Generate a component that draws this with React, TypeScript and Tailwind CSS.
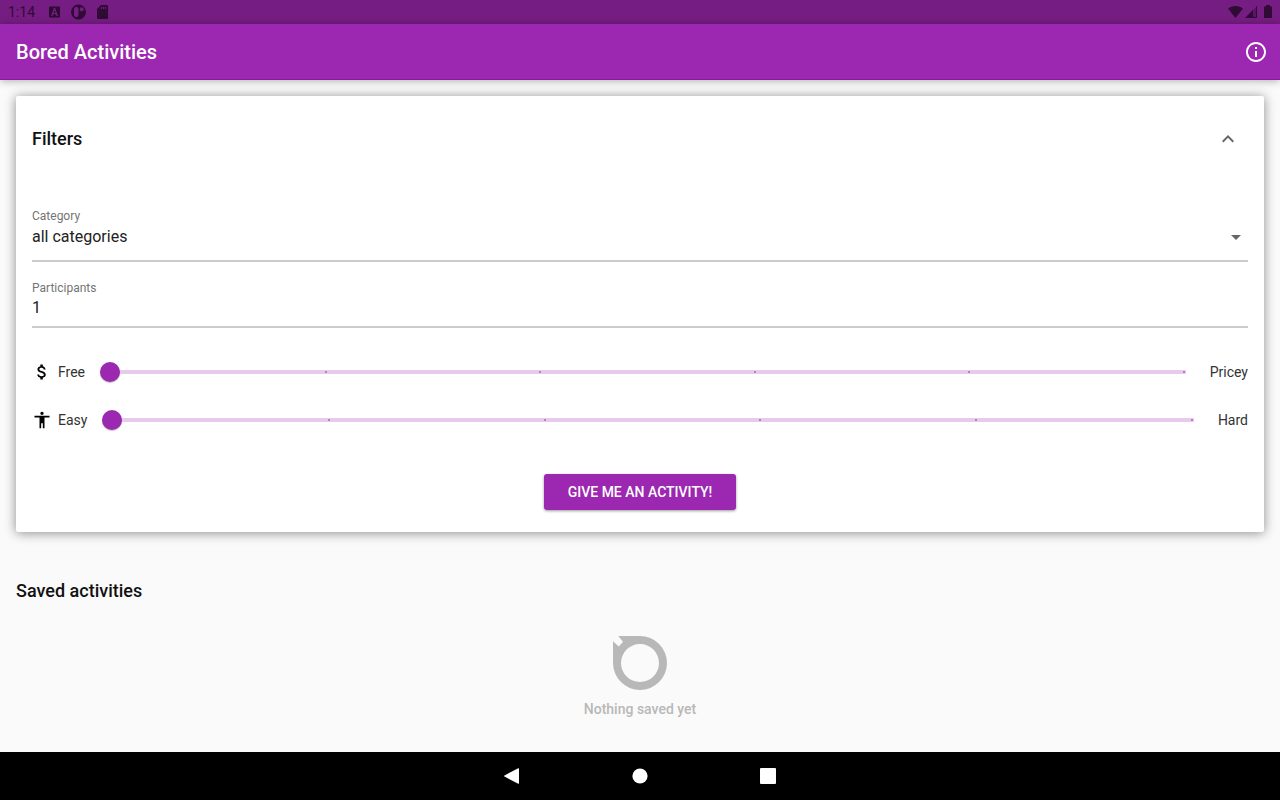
import { useState } from "react";
import { MdAccessibility, MdArrowDropDown, MdAttachMoney, MdExpandLess, MdInfoOutline } from "react-icons/md";
import type { ReactNode } from "react";

function StatusBar() {
  return (
    <div className="flex h-6 items-center justify-between bg-[#761d83] pl-2 pr-1 text-[#2f0b35]">
      <div className="flex items-center">
        <span className="w-10 text-sm">1:14</span>
        <svg viewBox="0 0 70 24" className="h-6 w-[70px]" fill="currentColor" aria-hidden="true">
          <path fillRule="evenodd" d="M2 6.500h9a1 1 0 0 1 1 1v9a1 1 0 0 1-1 1H2a1 1 0 0 1-1-1v-9a1 1 0 0 1 1-1zM5.800 8 3 16h1.500l.6-1.800h2.800l.6 1.800H10L7.200 8zm.7 1.800 1 3.100h-2z" />
          <path fillRule="evenodd" d="M30.500 4.500a7.500 7.500 0 1 0 0 15 7.500 7.500 0 0 0 0-15zM28 7h.5a2 2 0 0 1 2 2v6a2 2 0 0 1-2 2H28a2 2 0 0 1-2-2V9a2 2 0 0 1 2-2zM33.700 7.200a2.100 2.100 0 1 1 0 4.200 2.100 2.100 0 0 1 0-4.200z" />
          <path fillRule="evenodd" d="M53 5h6a1 1 0 0 1 1 1v12a1 1 0 0 1-1 1H50a1 1 0 0 1-1-1V9zM53 7v2h1V7zm2 0v2h1V7zm2 0v2h1V7z" />
        </svg>
      </div>
      <svg viewBox="0 0 50 24" className="h-6 w-[50px]" fill="currentColor" aria-hidden="true">
        <path d="M2 8.500C6 5 13 5 17 8.500L9.500 18z" />
        <path fillOpacity=".4" d="M31 6v12H19z" />
        <path d="M27 10v8h-8zM31 6v12h-1V7zM27 17h4v1h-4z" />
        <path d="M40 5h4v1.500h2V18h-8V6.500h2z" />
      </svg>
    </div>
  );
}

function LevelSlider({ icon, low, high, name }: { icon: ReactNode; low: string; high: string; name: string }) {
  const [value, setValue] = useState(0);
  return (
    <div className="flex h-12 items-center text-sm text-[#333]">
      <span className="mr-1.5 text-xl text-black">{icon}</span>
      <span>{low}</span>
      <div className="mx-[15px] grid flex-1 items-center">
        <div className="col-start-1 row-start-1 mx-[9px] flex h-1 items-center justify-between bg-[#e7cbec] px-px">
          {[0, 1, 2, 3, 4, 5].map((tick) => (
            <span key={tick} className="size-0.5 rounded-full bg-[#b65fc3]" />
          ))}
        </div>
        <input
          type="range"
          aria-label={name}
          min={0}
          max={5}
          value={value}
          onChange={(e) => setValue(Number(e.target.value))}
          className="col-start-1 row-start-1 m-0 h-5 w-full min-w-0 cursor-pointer appearance-none bg-transparent [&::-webkit-slider-thumb]:size-5 [&::-webkit-slider-thumb]:appearance-none [&::-webkit-slider-thumb]:rounded-full [&::-webkit-slider-thumb]:bg-[#9c27b0] [&::-webkit-slider-thumb]:shadow-[0_1px_1px_rgba(0,0,0,0.25)]"
        />
      </div>
      <span>{high}</span>
    </div>
  );
}

function Filters() {
  return (
    <section className="m-4 rounded-xs bg-white px-4 pb-[22px] pt-4 shadow-[0_1px_12px_rgba(0,0,0,0.45)]">
      <div className="flex h-[54px] items-center justify-between">
        <h2 className="text-lg font-medium text-[#111]">Filters</h2>
        <button aria-label="Collapse filters" className="mr-2 text-2xl text-[#666]">
          <MdExpandLess />
        </button>
      </div>
      <div className="mt-10 border-b-2 border-[#cbcbcb] pb-2.5">
        <label htmlFor="category" className="block pt-0.5 text-xs leading-4 text-[#757575]">
          Category
        </label>
        <div className="grid items-center">
          <select id="category" className="col-start-1 row-start-1 h-[26px] w-full appearance-none bg-transparent text-base text-[#222]">
            <option>all categories</option>
          </select>
          <MdArrowDropDown className="pointer-events-none col-start-1 row-start-1 justify-self-end text-2xl text-[#666]" />
        </div>
      </div>
      <div className="mt-[18px] border-b-2 border-[#cbcbcb] pb-1.5">
        <label htmlFor="participants" className="block text-xs leading-4 text-[#757575]">
          Participants
        </label>
        <input id="participants" defaultValue="1" inputMode="numeric" className="block h-6 w-full bg-transparent text-base text-[#222] outline-none" />
      </div>
      <div className="mt-5">
        <LevelSlider icon={<MdAttachMoney />} low="Free" high="Pricey" name="Price" />
        <LevelSlider icon={<MdAccessibility />} low="Easy" high="Hard" name="Difficulty" />
      </div>
      <div className="mt-[30px] flex justify-center">
        <button className="h-9 rounded-[3px] bg-[#9c27b0] px-6 text-sm font-medium text-white shadow-[0_1px_3px_rgba(0,0,0,0.4)]">
          GIVE ME AN ACTIVITY!
        </button>
      </div>
    </section>
  );
}

export default function App() {
  return (
    <div className="flex min-h-screen flex-col bg-[#fafafa] font-[Roboto,sans-serif]">
      <StatusBar />
      <header className="flex h-14 items-center justify-between border-b border-[#8a1a9e] bg-[#9c27b0] pl-4 pr-3 text-white shadow-[0_1px_8px_rgba(0,0,0,0.3)]">
        <h1 className="text-xl font-medium">Bored Activities</h1>
        <button aria-label="About" className="text-2xl">
          <MdInfoOutline />
        </button>
      </header>
      <main className="flex-1">
        <Filters />
        <section className="mt-[45px] px-4">
          <h2 className="text-lg font-medium text-[#111]">Saved activities</h2>
          <div className="mt-[31px] flex flex-col items-center text-[#b8b8b8]">
            <svg viewBox="0 0 54 54" className="size-[54px]" fill="currentColor" aria-hidden="true">
              <path fillRule="evenodd" d="M5.300 0H27A27 27 0 1 1 0 27V5.300L5.800 10.500L10 5.700zM27 8a19 19 0 1 0 0 38 19 19 0 0 0 0-38z" />
            </svg>
            <p className="mt-[7px] text-sm font-medium leading-6">Nothing saved yet</p>
          </div>
        </section>
      </main>
      <nav className="flex h-12 items-center justify-center gap-28 bg-black text-white">
        <button aria-label="Back">
          <svg viewBox="0 0 16 16" className="size-4" fill="currentColor"><path d="M14.200.2Q15 0 15 1v14q0 1-.8.8L.5 8.600Q-.3 8 .5 7.400z" /></svg>
        </button>
        <button aria-label="Home">
          <svg viewBox="0 0 16 16" className="size-4" fill="currentColor"><circle cx="8" cy="8" r="7.600" /></svg>
        </button>
        <button aria-label="Recent apps">
          <svg viewBox="0 0 16 16" className="size-4" fill="currentColor"><rect width="16" height="16" rx="1" /></svg>
        </button>
      </nav>
    </div>
  );
}
